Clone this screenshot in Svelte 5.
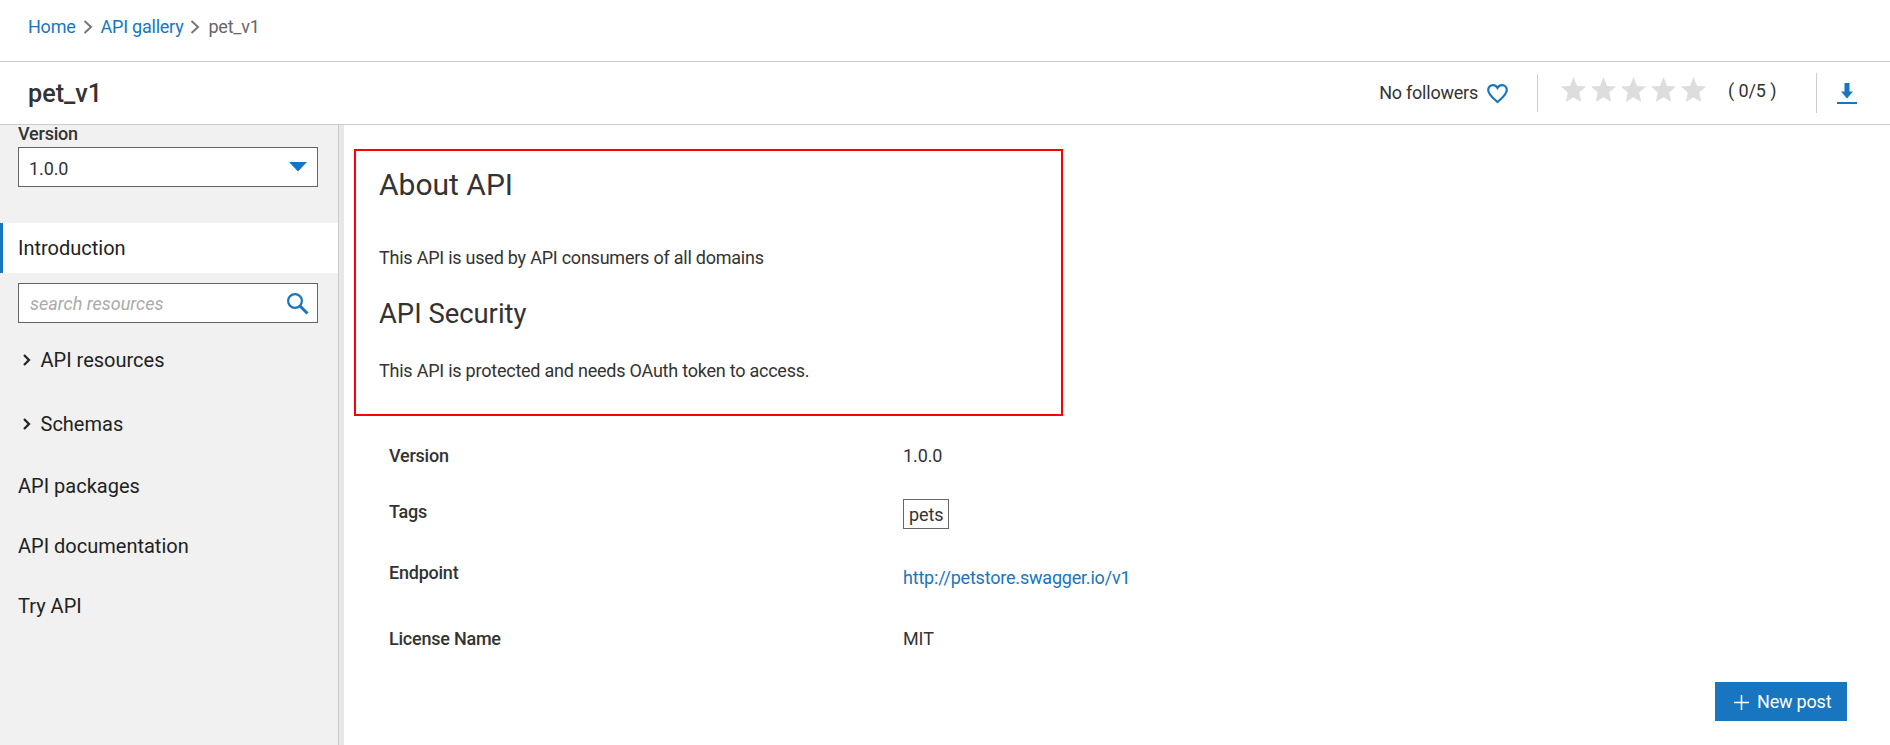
<script>
  const crumbs = ['Home', 'API gallery'];
  const groups = ['API resources', 'Schemas'];
  const links = ['API packages', 'API documentation', 'Try API'];
  const stars = [1, 2, 3, 4, 5];
</script>

<div class="page">
  <nav class="crumbs">
    {#each crumbs as crumb}
      <span class="link">{crumb}</span>
      <svg class="sep" width="10" height="14" viewBox="0 0 10 14"><path d="M1.500 1 8 7l-6.500 6" /></svg>
    {/each}
    <span>pet_v1</span>
  </nav>

  <header>
    <h1>pet_v1</h1>
    <div class="followers">
      <span>No followers</span>
      <svg width="21" height="20" viewBox="0 0 21 20"><path d="M10.500 18C8 15.600 1.200 10.600 1.200 6.200 1.200 3.300 3.300 1.200 5.900 1.200c1.900 0 3.500 1 4.600 2.700 1.100-1.700 2.700-2.700 4.600-2.700 2.600 0 4.700 2.100 4.700 5C19.800 10.600 13 15.600 10.500 18Z" /></svg>
    </div>
    <div class="rating">
      <div class="stars">
        {#each stars as star (star)}
          <svg width="25" height="25" viewBox="0 0 25 25"><path d="M12.500 0 16 8.900 25 9.600 18.200 15.600 20.200 25 12.500 20.300 4.800 25 6.800 15.600 0 9.600 9 8.900Z" /></svg>
        {/each}
      </div>
      <span class="score">( 0/5 )</span>
    </div>
    <div class="download">
      <svg width="20" height="21" viewBox="0 0 20 21"><path d="M7.500 0h5v8.500H16L10 15.500 4 8.500h3.500ZM0 19h20v2H0Z" /></svg>
    </div>
  </header>

  <div class="body">
    <aside>
      <div class="label">Version</div>
      <div class="field select">
        <span>1.0.0</span>
        <svg width="18" height="10" viewBox="0 0 18 10"><path d="M0 0h18L9 9.500Z" /></svg>
      </div>
      <div class="item active">Introduction</div>
      <div class="field search">
        <span>search resources</span>
        <svg width="22" height="22" viewBox="0 0 22 22"><circle cx="8" cy="8" r="6.900" /><path d="m12.800 12.800 7.700 7.700" /></svg>
      </div>
      {#each groups as group}
        <div class="item group">
          <svg width="8" height="12" viewBox="0 0 8 12"><path d="m1 1 5 5-5 5" /></svg>
          <span>{group}</span>
        </div>
      {/each}
      {#each links as link}
        <div class="item">{link}</div>
      {/each}
    </aside>
    <div class="splitter"></div>

    <main>
      <section class="about">
        <h2>About API</h2>
        <p>This API is used by API consumers of all domains</p>
        <h3>API Security</h3>
        <p class="last">This API is protected and needs OAuth token to access.</p>
      </section>
      <dl>
        <dt>Version</dt>
        <dd class="plain">1.0.0</dd>
        <dt>Tags</dt>
        <dd class="tags"><span class="tag">pets</span></dd>
        <dt>Endpoint</dt>
        <dd class="endpoint link">http://petstore.swagger.io/v1</dd>
        <dt>License Name</dt>
        <dd class="plain">MIT</dd>
      </dl>
      <button>
        <svg width="15" height="15" viewBox="0 0 15 15"><path d="M7.500 0v15M0 7.500h15" /></svg>
        <span>New post</span>
      </button>
    </main>
  </div>
</div>

<style>
  :global(body) {
    margin: 0;
    overflow: hidden;
  }
  .page {
    box-sizing: border-box;
    width: 1890px;
    height: 745px;
    display: flex;
    flex-direction: column;
    background: #fff;
    color: #333;
    font: 400 18px/24px Roboto, sans-serif;
    letter-spacing: -0.23px;
    overflow: hidden;
  }
  svg { display: block; flex: none; }
  h1, h2, h3, p, dl, dt, dd { margin: 0; font-weight: 400; }
  .link { color: #1776bf; }
  .crumbs {
    box-sizing: border-box;
    height: 62px;
    padding: 15px 28px 0;
    border-bottom: 1px solid #ccc;
    display: flex;
    align-items: flex-start;
    color: #666;
  }
  .sep { margin: 5px 8px 0 7px; fill: none; stroke: #777; stroke-width: 2; }
  header {
    box-sizing: border-box;
    height: 63px;
    padding: 0 33px 0 28px;
    border-bottom: 1px solid #ccc;
    display: flex;
    align-items: flex-start;
  }
  h1 { flex: 1; margin-top: 16px; font-size: 25.200px; line-height: 32px; font-weight: 500; letter-spacing: 0; }
  .followers { display: flex; gap: 9px; padding: 19px 29px 0 0; }
  .followers svg { margin-top: 3px; fill: none; stroke: #1776bf; stroke-width: 2.200; }
  .rating {
    box-sizing: border-box;
    width: 279px;
    height: 38px;
    margin-top: 12px;
    padding-left: 23px;
    border-left: 1px solid #ccc;
    display: flex;
  }
  .stars { display: flex; gap: 5px; margin-top: 3px; fill: #ddd; }
  .score { margin: 5px 0 0 22px; white-space: pre; letter-spacing: -0.1px; }
  .download {
    height: 40px;
    margin-top: 11px;
    padding-left: 20px;
    border-left: 1px solid #ccc;
  }
  .download svg { margin-top: 10px; fill: #1776bf; }
  .body { flex: 1; display: flex; min-height: 0; }
  aside {
    width: 338px;
    background: #f1f1f1;
    border-right: 1px solid #ccc;
    color: #222;
    font-size: 20px;
    letter-spacing: 0;
  }
  .label { margin: -3px 0 1px 18px; font-size: 18px; font-weight: 500; color: #333; letter-spacing: -0.2px; }
  .field {
    box-sizing: border-box;
    width: 300px;
    height: 40px;
    margin-left: 18px;
    padding: 0 9px 0 11px;
    border: 1px solid #666;
    background: #fff;
    display: flex;
    align-items: center;
    justify-content: space-between;
    font-size: 18px;
    color: #333;
  }
  .select { margin-bottom: 36px; padding-left: 10px; }
  .select span { padding-top: 3px; letter-spacing: -0.1px; }
  .select svg { fill: #1776bf; margin-right: 1px; }
  .search { margin-top: 10px; margin-bottom: 5px; padding-top: 2px; }
  .search span { color: #aaa; font-style: italic; letter-spacing: 0; }
  .search svg { fill: none; stroke: #1776bf; stroke-width: 2.200; margin-right: -1px; }
  .search path { stroke-width: 3; }
  .item { height: 60px; line-height: 60px; padding-left: 18px; }
  .active {
    height: 50px;
    line-height: 50px;
    padding-left: 15px;
    border-left: 3px solid #1776bf;
    background: #fff;
  }
  .group { height: 64px; line-height: 64px; padding-left: 23px; display: flex; align-items: center; gap: 9.500px; }
  .group svg { fill: none; stroke: #222; stroke-width: 2.200; }
  .splitter { width: 5px; background: #e8e8e8; }
  main { flex: 1; display: flex; flex-direction: column; }
  .about {
    box-sizing: border-box;
    width: 709px;
    height: 267px;
    margin: 24px 0 0 10px;
    padding: 14px 23px 0;
    border: 2px solid #f00;
  }
  h2 { font-size: 30px; line-height: 40px; letter-spacing: 0; }
  .about p { margin-top: 41px; }
  h3 { margin-top: 28px; font-size: 27.400px; line-height: 32px; letter-spacing: 0; }
  .about p.last { margin-top: 29px; }
  dl {
    display: grid;
    grid-template-columns: 514px 1fr;
    grid-template-rows: 56px 61px 66px 24px;
    margin: 28px 0 0 45px;
  }
  dt { font-weight: 500; }
  .plain { letter-spacing: -0.1px; }
  .tags { margin-top: -1px; letter-spacing: -0.1px; }
  .tag {
    box-sizing: border-box;
    display: inline-block;
    height: 30px;
    line-height: 30px;
    padding: 0 5px;
    border: 1px solid #666;
  }
  .endpoint { padding-top: 5px; letter-spacing: -0.2px; }
  button {
    align-self: flex-end;
    width: 132px;
    height: 39px;
    margin: 31px 43px 0 0;
    padding: 0 0 0 19px;
    border: 0;
    background: #1776bf;
    color: #fff;
    font: inherit;
    letter-spacing: -0.2px;
    display: flex;
    align-items: center;
    gap: 8px;
    white-space: nowrap;
  }
  button svg { stroke: #fff; stroke-width: 1.500; margin-top: 2px; }
</style>
